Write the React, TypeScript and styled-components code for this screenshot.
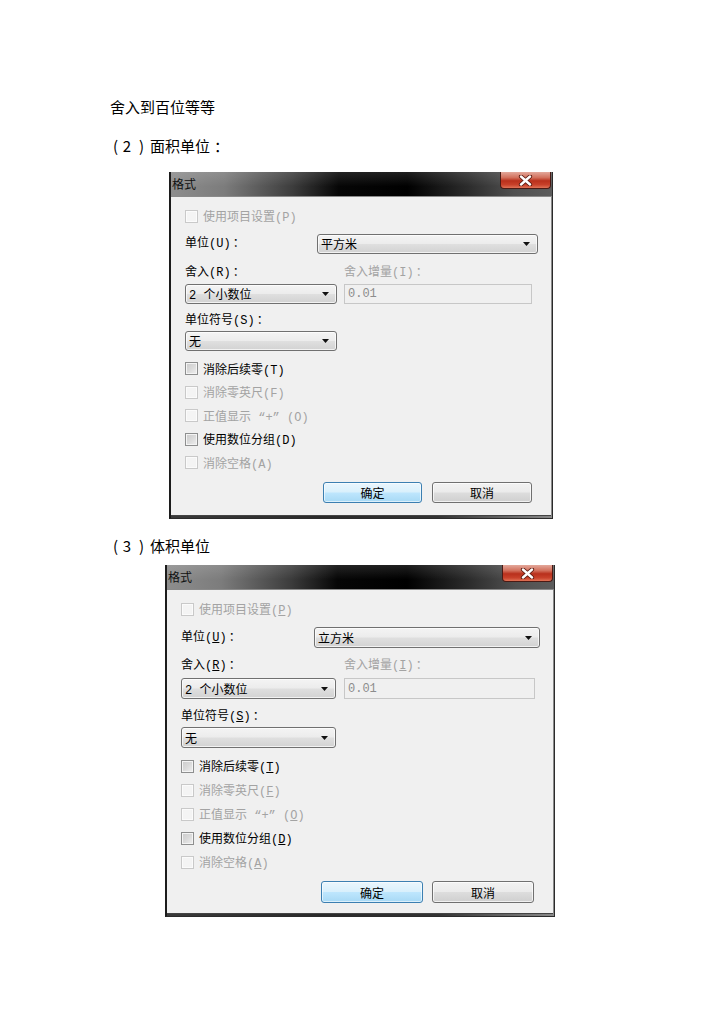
import React from 'react';
import styled, { createGlobalStyle } from 'styled-components';

const GlobalStyle = createGlobalStyle`
  html, body {
    margin: 0;
    padding: 0;
    background: #ffffff;
  }
  body {
    font-family: "Noto Sans CJK SC", sans-serif;
    color: #000;
  }
`;

type Metrics = {
  left: number;
  width: number;
  height: number;
  unitLabel: number;
  unitTop: number;
  ctrlH: number;
  roundTop: number;
  roundSelTop: number;
  selW: number;
  selGap: number;
  rightPad: number;
  symTop: number;
  symSelTop: number;
  checksTop: number;
  rowH: number;
  btnTop: number;
  btnH: number;
  okW: number;
  cancelW: number;
  btnGap: number;
  btnRight: number;
};

const m1: Metrics = {
  left: 59,
  width: 384,
  height: 347,
  unitLabel: 132,
  unitTop: 9,
  ctrlH: 20,
  roundTop: 12,
  roundSelTop: 4,
  selW: 152,
  selGap: 7,
  rightPad: 19,
  symTop: 10,
  symSelTop: 3,
  checksTop: 6,
  rowH: 23.5,
  btnTop: 7.5,
  btnH: 21,
  okW: 99,
  cancelW: 100,
  btnGap: 10,
  btnRight: 19,
};

const m2: Metrics = {
  left: 55,
  width: 390,
  height: 352,
  unitLabel: 133,
  unitTop: 9,
  ctrlH: 21,
  roundTop: 11,
  roundSelTop: 5,
  selW: 155,
  selGap: 8,
  rightPad: 18,
  symTop: 11,
  symSelTop: 3,
  checksTop: 6,
  rowH: 24,
  btnTop: 7,
  btnH: 22,
  okW: 102,
  cancelW: 102,
  btnGap: 9,
  btnRight: 19,
};

const Page = styled.div`
  width: 724px;
  min-height: 1024px;
  box-sizing: border-box;
  padding: 97px 0 0 110px;
`;

const Para = styled.p<{ $top: number }>`
  margin: ${(p) => p.$top}px 0 0;
  height: 20px;
  line-height: 20px;
  font-size: 15px;
  color: #000;
`;

// heading number "（2）" laid out with the wide spacing of the original
const NumCell = styled.span<{ $w: number }>`
  display: inline-block;
  width: ${(p) => p.$w}px;
  text-align: center;
`;

const HeadColon = styled.span`
  margin-left: 4px;
`;

const Window = styled.div<{ $m: Metrics; $top: number }>`
  margin: ${(p) => p.$top}px 0 0 ${(p) => p.$m.left}px;
  width: ${(p) => p.$m.width}px;
  height: ${(p) => p.$m.height}px;
  box-sizing: border-box;
  border: 1px solid #2b2b2b;
  border-top: none;
  border-left: 2px solid #1c1c1c;
  background: linear-gradient(90deg, #3a3a3a 0%, #2a2a2a 40%, #333 70%, #8a8a8a 100%);
  display: flex;
  flex-direction: column;
  font-family: "Liberation Mono", "Noto Sans CJK SC", monospace;
  font-size: 12px;
`;

const TitleBar = styled.div`
  height: 24px;
  flex: none;
  display: flex;
  justify-content: space-between;
  align-items: flex-start;
  background:
    linear-gradient(180deg, rgba(255, 255, 255, 0.12) 0%, rgba(255, 255, 255, 0) 60%),
    linear-gradient(90deg, #8d8d8d 0%, #7c7c7c 14%, #3c3c3c 32%, #060606 44%, #000 62%, #2c2c2c 78%, #505050 90%, #5c5c5c 100%);
`;

const Title = styled.span`
  font-family: "Noto Sans CJK SC", sans-serif;
  font-size: 12px;
  line-height: 24px;
  padding-left: 1px;
  color: #111;
`;

const CloseButton = styled.div`
  width: 51px;
  height: 17px;
  margin-right: 1px;
  box-sizing: border-box;
  border: 1px solid #4a1a14;
  border-top: none;
  border-radius: 0 0 4px 4px;
  background: linear-gradient(180deg, #e3a89b 0%, #d2705c 35%, #b9301c 55%, #c8412a 80%, #e07256 100%);
  display: flex;
  align-items: center;
  justify-content: center;
`;

const Client = styled.div`
  flex: 1;
  margin: 0 1px 2px 0;
  background: #f0f0f0;
  border-top: 1px solid #8a8a8a;
  border-bottom: 1px solid #444;
  box-sizing: border-box;
  padding: 10px 0 0 14px;
  display: flex;
  flex-direction: column;
`;

const CheckRow = styled.div<{ $h: number; $disabled?: boolean }>`
  height: ${(p) => p.$h}px;
  display: flex;
  align-items: center;
  gap: 5px;
  color: ${(p) => (p.$disabled ? '#a3a3a3' : '#000')};
  white-space: nowrap;
`;

const Box = styled.span<{ $disabled?: boolean }>`
  width: 13px;
  height: 13px;
  box-sizing: border-box;
  flex: none;
  border: 1px solid ${(p) => (p.$disabled ? '#c9c9c9' : '#8e8f8f')};
  background: ${(p) =>
    p.$disabled
      ? '#f4f4f4'
      : 'linear-gradient(135deg, #cbcbcb 0%, #dadada 50%, #f0f0f0 100%)'};
  box-shadow: inset 0 0 0 1px ${(p) => (p.$disabled ? '#fbfbfb' : '#f4f4f4')};
`;

const UnitRow = styled.div<{ $m: Metrics }>`
  margin-top: ${(p) => p.$m.unitTop}px;
  padding-right: 13px;
  display: grid;
  grid-template-columns: ${(p) => p.$m.unitLabel}px 1fr;
  align-items: center;
`;

const Label = styled.span<{ $disabled?: boolean }>`
  color: ${(p) => (p.$disabled ? '#a3a3a3' : '#000')};
  line-height: 14px;
  white-space: nowrap;
`;

const LabelColon = styled.span`
  margin-left: 2px;
`;

const RoundGrid = styled.div<{ $m: Metrics }>`
  margin-top: ${(p) => p.$m.roundTop}px;
  padding-right: ${(p) => p.$m.rightPad}px;
  display: grid;
  grid-template-columns: ${(p) => p.$m.selW}px 1fr;
  column-gap: ${(p) => p.$m.selGap}px;
  row-gap: ${(p) => p.$m.roundSelTop}px;
`;

const SymLabel = styled(Label)<{ $top: number }>`
  margin-top: ${(p) => p.$top}px;
  height: 14px;
`;

const SelectBox = styled.div<{ $h: number; $w?: number; $top?: number }>`
  height: ${(p) => p.$h}px;
  width: ${(p) => (p.$w ? `${p.$w}px` : 'auto')};
  margin-top: ${(p) => p.$top ?? 0}px;
  box-sizing: border-box;
  border: 1px solid #707070;
  border-radius: 3px;
  background: linear-gradient(180deg, #f4f4f4 0%, #ececec 48%, #dfdfdf 52%, #d2d2d2 100%);
  box-shadow: inset 0 0 0 1px rgba(255, 255, 255, 0.7);
  display: flex;
  align-items: center;
  justify-content: space-between;
  padding: 0 7px 0 3px;
  color: #000;
`;

const TextInput = styled.div<{ $h: number }>`
  height: ${(p) => p.$h}px;
  box-sizing: border-box;
  border: 1px solid #c7c7c7;
  background: #f0f0f0;
  display: flex;
  align-items: center;
  padding-left: 3px;
  color: #8c8c8c;
`;

const Checks = styled.div<{ $top: number }>`
  margin-top: ${(p) => p.$top}px;
  display: flex;
  flex-direction: column;
`;

const ButtonBar = styled.div<{ $m: Metrics }>`
  margin-top: ${(p) => p.$m.btnTop}px;
  padding-right: ${(p) => p.$m.btnRight}px;
  display: flex;
  justify-content: flex-end;
  gap: ${(p) => p.$m.btnGap}px;
`;

const Button = styled.div<{ $w: number; $h: number; $primary?: boolean }>`
  width: ${(p) => p.$w}px;
  height: ${(p) => p.$h}px;
  box-sizing: border-box;
  border: 1px solid ${(p) => (p.$primary ? '#3c7fb1' : '#707070')};
  border-radius: 3px;
  background: ${(p) =>
    p.$primary
      ? 'linear-gradient(180deg, #eaf6fd 0%, #d9f0fc 48%, #bee6fd 52%, #a7d9f5 100%)'
      : 'linear-gradient(180deg, #f2f2f2 0%, #ebebeb 48%, #dddddd 52%, #cfcfcf 100%)'};
  box-shadow: inset 0 0 0 1px ${(p) => (p.$primary ? 'rgba(255,255,255,0.6)' : 'rgba(255,255,255,0.7)')};
  display: flex;
  align-items: center;
  justify-content: center;
  font-family: "Noto Sans CJK SC", sans-serif;
  font-size: 12px;
  color: #000;
`;

const Arrow = () => (
  <svg width="7" height="4" viewBox="0 0 7 4">
    <path d="M0 0h7L3.5 4z" fill="#111" />
  </svg>
);

const CloseX = () => (
  <svg width="15" height="11" viewBox="0 0 15 11">
    <path d="M3 1.5L12 9.5M12 1.5L3 9.5" stroke="#5a1a10" strokeWidth="4.2" strokeLinecap="round" />
    <path d="M3 1.5L12 9.5M12 1.5L3 9.5" stroke="#ffffff" strokeWidth="2.4" strokeLinecap="round" />
  </svg>
);

const Key = ({ k, u }: { k: string; u: boolean }) => <>({u ? <u>{k}</u> : k})</>;

const Colon = () => <LabelColon>：</LabelColon>;

const HeadNum = ({ n }: { n: string }) => (
  <>
    <NumCell $w={11}>(</NumCell>
    <NumCell $w={12}>{n}</NumCell>
    <NumCell $w={17}>)</NumCell>
  </>
);

type DialogProps = { m: Metrics; top: number; unit: string; underline: boolean };

const FormatDialog = ({ m, top, unit, underline }: DialogProps) => {
  const checks: { text: string; key: string; disabled: boolean }[] = [
    { text: '消除后续零', key: 'T', disabled: false },
    { text: '消除零英尺', key: 'F', disabled: true },
    { text: '正值显示 “+” ', key: 'O', disabled: true },
    { text: '使用数位分组', key: 'D', disabled: false },
    { text: '消除空格', key: 'A', disabled: true },
  ];
  return (
    <Window $m={m} $top={top}>
      <TitleBar>
        <Title>格式</Title>
        <CloseButton>
          <CloseX />
        </CloseButton>
      </TitleBar>
      <Client>
        <CheckRow $h={18} $disabled>
          <Box $disabled />
          <span>
            使用项目设置<Key k="P" u={underline} />
          </span>
        </CheckRow>
        <UnitRow $m={m}>
          <Label>
            单位<Key k="U" u={underline} />
            <Colon />
          </Label>
          <SelectBox $h={m.ctrlH}>
            <span>{unit}</span>
            <Arrow />
          </SelectBox>
        </UnitRow>
        <RoundGrid $m={m}>
          <Label>
            舍入<Key k="R" u={underline} />
            <Colon />
          </Label>
          <Label $disabled>
            舍入增量<Key k="I" u={underline} />
            <Colon />
          </Label>
          <SelectBox $h={m.ctrlH}>
            <span>2 个小数位</span>
            <Arrow />
          </SelectBox>
          <TextInput $h={m.ctrlH}>0.01</TextInput>
        </RoundGrid>
        <SymLabel $top={m.symTop}>
          单位符号<Key k="S" u={underline} />
          <Colon />
        </SymLabel>
        <SelectBox $h={m.ctrlH} $w={m.selW} $top={m.symSelTop}>
          <span>无</span>
          <Arrow />
        </SelectBox>
        <Checks $top={m.checksTop}>
          {checks.map((c) => (
            <CheckRow key={c.key} $h={m.rowH} $disabled={c.disabled}>
              <Box $disabled={c.disabled} />
              <span>
                {c.text}
                <Key k={c.key} u={underline} />
              </span>
            </CheckRow>
          ))}
        </Checks>
        <ButtonBar $m={m}>
          <Button $w={m.okW} $h={m.btnH} $primary>
            确定
          </Button>
          <Button $w={m.cancelW} $h={m.btnH}>
            取消
          </Button>
        </ButtonBar>
      </Client>
    </Window>
  );
};

export default function App() {
  return (
    <>
      <GlobalStyle />
      <Page>
        <Para $top={0}>舍入到百位等等</Para>
        <Para $top={19}>
          <HeadNum n="2" />
          面积单位<HeadColon>：</HeadColon>
        </Para>
        <FormatDialog m={m1} top={16} unit="平方米" underline={false} />
        <Para $top={17}>
          <HeadNum n="3" />
          体积单位
        </Para>
        <FormatDialog m={m2} top={9} unit="立方米" underline />
      </Page>
    </>
  );
}
